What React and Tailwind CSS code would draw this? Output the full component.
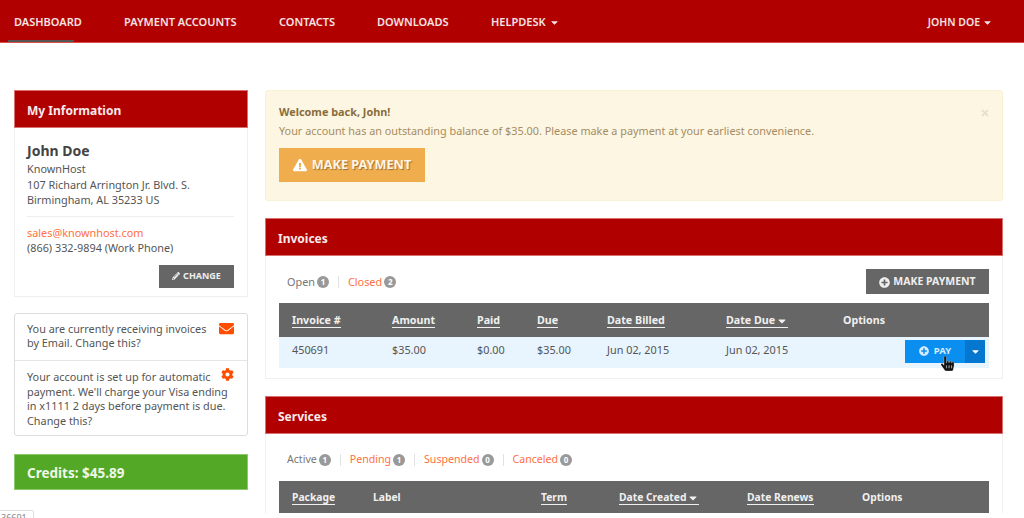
import { FaCaretDown, FaCog, FaEnvelope, FaExclamationTriangle, FaHandPointer, FaPencilAlt, FaPlusCircle, FaTimes } from 'react-icons/fa';

const navItems = [
	{ label: 'DASHBOARD', width: 'w-[110px]', active: true },
	{ label: 'PAYMENT ACCOUNTS', width: 'w-[155px]' },
	{ label: 'CONTACTS', width: 'w-[98px]' },
	{ label: 'DOWNLOADS', width: 'w-[114px]' },
	{ label: 'HELPDESK', caret: true },
];

const invoiceCols = [
	{ label: 'Invoice #', width: 'w-[100px]', link: true },
	{ label: 'Amount', width: 'w-[85px]', link: true },
	{ label: 'Paid', width: 'w-[60px]', link: true },
	{ label: 'Due', width: 'w-[70px]', link: true },
	{ label: 'Date Billed', width: 'w-[119px]', link: true },
	{ label: 'Date Due', width: 'w-[117px]', link: true, sort: true },
	{ label: 'Options', width: 'w-[100px]' },
];

const serviceCols = [
	{ label: 'Package', width: 'w-[81px]', link: true },
	{ label: 'Label', width: 'w-[168px]' },
	{ label: 'Term', width: 'w-[78px]', link: true },
	{ label: 'Date Created', width: 'w-[128px]', link: true, sort: true },
	{ label: 'Date Renews', width: 'w-[115px]', link: true },
	{ label: 'Options', width: 'w-[80px]' },
];

const invoiceRow = [
	['450691', 'w-[100px]'],
	['$35.00', 'w-[85px]'],
	['$0.00', 'w-[60px]'],
	['$35.00', 'w-[70px]'],
	['Jun 02, 2015', 'w-[119px]'],
	['Jun 02, 2015', 'w-[117px]'],
];

const PanelHeader = ({ title }) => (
	<div className="flex h-[38px] items-center border border-[#d97070] bg-[#b00000] px-[12px] pt-[3px] text-[12px] font-bold text-[#f8eaea]">
		{title}
	</div>
);

const Filter = ({ label, count, active, last }) => (
	<div className="flex items-center">
		<span className={active ? 'text-[#777777]' : 'text-[#ff7040]'}>{label}</span>
		<span className="ml-[2px] flex h-[12px] w-[12px] items-center justify-center rounded-full bg-[#999999] text-[8px] font-bold text-white">{count}</span>
		{!last && <span className="mx-[9px] h-[12px] w-px bg-[#e2e2e2]"></span>}
	</div>
);

const TableHead = ({ cols, className }) => (
	<div className={`flex items-center bg-[#666666] pl-[13px] font-bold text-[#f0f0f0] ${className}`}>
		{cols.map((col) => (
			<div key={col.label} className={col.width}>
				<span className={col.link ? 'inline-flex items-center gap-[1px] border-b border-[#f0f0f0] leading-[13px]' : ''}>
					{col.label}
					{col.sort && <FaCaretDown size={12} />}
				</span>
			</div>
		))}
	</div>
);

export default function App() {
	return (
		<div className="relative h-[518px] overflow-hidden bg-white font-['Noto_Sans',sans-serif] text-[10.85px] text-[#555555]">
			<nav className="flex h-[43px] items-stretch justify-between border-b border-[#d94f4f] bg-[#b00000] text-[11px] font-semibold text-[#f5e3e3]">
				<div className="flex">
					{navItems.map((item) => (
						<div key={item.label} className={`flex items-center pl-[14px] pt-[3px] ${item.width ?? ''} ${item.active ? 'relative' : ''}`}>
							{item.label}
							{item.caret && <FaCaretDown size={11} className="ml-[3px]" />}
							{item.active && <span className="absolute bottom-0 left-[8px] h-[2px] w-[66px] bg-[#555555]"></span>}
						</div>
					))}
				</div>
				<div className="flex items-center pr-[31px] pt-[3px] text-[10.5px]">
					JOHN DOE
					<FaCaretDown size={11} className="ml-[2px]" />
				</div>
			</nav>

			<div className="flex items-start gap-[17px] pl-[14px] pt-[47px]">
				{/* left column */}
				<aside className="flex w-[234px] flex-col">
					<div className="border-b border-[#eeeeee]">
						<PanelHeader title="My Information" />
						<div className="border-x border-[#f0f0f0] pb-[8px] pl-[12px] pr-[13px] pt-[13px]">
							<div className="text-[14px] font-bold leading-[20px] text-[#444444]">John Doe</div>
							<div className="leading-[15.5px]">
								<div>KnownHost</div>
								<div>107 Richard Arrington Jr. Blvd. S.</div>
								<div>Birmingham, AL 35233 US</div>
							</div>
							<div className="my-[8px] h-px bg-[#eeeeee]"></div>
							<div className="leading-[15.5px]">
								<div className="text-[#ff7040]">sales@knownhost.com</div>
								<div>(866) 332-9894 (Work Phone)</div>
							</div>
							<div className="mt-[9px] flex justify-end">
								<button className="flex h-[23px] w-[75px] items-center justify-center gap-[3px] bg-[#666666] text-[9px] font-bold text-[#eeeeee]">
									<FaPencilAlt size={8} />
									CHANGE
								</button>
							</div>
						</div>
					</div>

					<div className="mt-[16px] rounded-[3px] border border-[#dddddd] leading-[14.7px]">
						<div className="flex justify-between border-b border-[#e5e5e5] pb-[9px] pl-[12px] pr-[13px] pt-[8px]">
							<p className="w-[185px]">You are currently receiving invoices by Email. Change this?</p>
							<FaEnvelope size={15} className="mt-[-1px] text-[#ff4d00]" />
						</div>
						<div className="relative pb-[6px] pl-[12px] pr-[8px] pt-[9px]">
							<p>Your account is set up for automatic payment. We'll charge your Visa ending in x1111 2 days before payment is due. Change this?</p>
							<FaCog size={13} className="absolute right-[13px] top-[7px] text-[#ff4d00]" />
						</div>
					</div>

					<div className="mt-[18px] flex h-[36px] items-center border border-[#8cc96a] bg-[#53a925] px-[12px] pt-[2px] text-[13.5px] font-bold text-[#eef7e8]">
						Credits: $45.89
					</div>
				</aside>

				{/* right column */}
				<main className="flex w-[738px] flex-col">
					<div className="relative h-[111px] rounded-[3px] border border-[#faf0d4] bg-[#fcf6e3] px-[13px] pt-[13px] text-[#a88c5f]">
						<div className="font-bold leading-[15px] text-[#8a6d3b]">Welcome back, John!</div>
						<div className="mt-[4px] leading-[15px]">Your account has an outstanding balance of $35.00. Please make a payment at your earliest convenience.</div>
						<button className="mt-[10px] flex h-[34px] w-[146px] items-center justify-center gap-[5px] bg-[#f0ad4e] text-[12.7px] font-bold text-[#fdf5e6] [text-shadow:1px_1px_1px_rgba(0,0,0,0.35)]">
							<FaExclamationTriangle size={14} className="text-white" />
							MAKE PAYMENT
						</button>
						<FaTimes size={10} className="absolute right-[12px] top-[17px] text-[#e8e0c8]" />
					</div>

					<section className="mt-[17px]">
						<PanelHeader title="Invoices" />
						<div className="h-[123px] border-x border-b border-[#f0f0f0] px-[13px]">
							<div className="flex h-[47px] items-center justify-between">
								<div className="flex items-center pl-[8px] pt-[5px]">
									<Filter label="Open" count="1" active />
									<Filter label="Closed" count="2" last />
								</div>
								<button className="mt-[4px] flex h-[25px] w-[123px] items-center justify-center gap-[3px] bg-[#666666] pt-[1px] text-[10.5px] font-bold text-[#eeeeee]">
									<FaPlusCircle size={11} />
									MAKE PAYMENT
								</button>
							</div>
							<TableHead cols={invoiceCols} className="h-[34px] pt-[1px] text-[10.7px]" />
							<div className="flex h-[31px] items-center bg-[#e8f4fe] pl-[13px]">
								{invoiceRow.map(([text, width], i) => (
									<div key={i} className={`${width} pb-[5px]`}>{text}</div>
								))}
								<div className="relative mb-[3px] ml-[62px] flex h-[23px] w-[80px] text-[9.5px] font-bold text-[#d5ecff]">
									<div className="flex w-[60px] items-center justify-center gap-[5px] bg-[#0a8ff0]">
										<FaPlusCircle size={10} />
										PAY
									</div>
									<div className="flex w-[20px] items-center justify-center bg-[#0577cf] text-white">
										<FaCaretDown size={11} />
									</div>
									<FaHandPointer size={15} className="absolute left-[35px] top-[16px] text-[#111111]" stroke="#ffffff" strokeWidth={10} />
								</div>
							</div>
						</div>
					</section>

					<section className="mt-[17px]">
						<PanelHeader title="Services" />
						<div className="border-x border-[#f0f0f0] px-[13px]">
							<div className="flex h-[47px] items-center pl-[8px] pt-[5px] text-[10.6px]">
								<Filter label="Active" count="1" active />
								<Filter label="Pending" count="1" />
								<Filter label="Suspended" count="0" />
								<Filter label="Canceled" count="0" last />
							</div>
							<TableHead cols={serviceCols} className="h-[32px] pt-[2px] text-[10.3px]" />
						</div>
					</section>
				</main>
			</div>

			{/* clipped tooltip at the bottom edge */}
			<div className="absolute left-[-8px] top-[510px] h-[20px] w-[42px] rounded-[2px] border border-[#dddddd] bg-white pl-[8px] text-[9px] text-[#888888]">36691</div>
		</div>
	);
}
